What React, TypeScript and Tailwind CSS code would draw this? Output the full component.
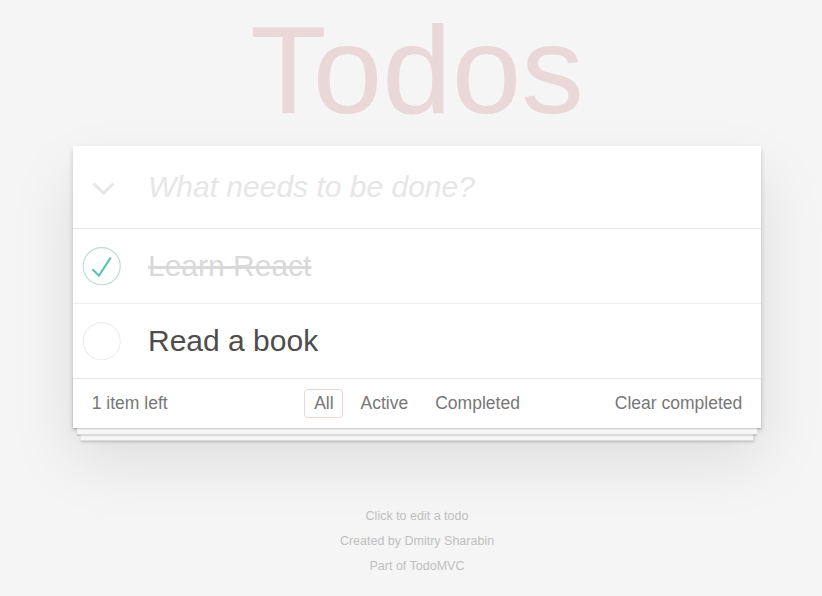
import { useState } from 'react';

type Todo = { id: number; title: string; completed: boolean };

const initialTodos: Todo[] = [
  { id: 1, title: 'Learn React', completed: true },
  { id: 2, title: 'Read a book', completed: false },
];

function Toggle({ checked }: { checked: boolean }) {
  return (
    <svg width="50" height="50" viewBox="-10 -18 100 135" className="shrink-0">
      <circle cx="50" cy="50" r="50" fill="none" stroke={checked ? '#bddad5' : '#ededed'} strokeWidth="3" />
      {checked && <path fill="#5dc2af" d="M72 25L42 71 27 56l-4 4 20 20 34-52z" />}
    </svg>
  );
}

export default function App() {
  const [todos, setTodos] = useState<Todo[]>(initialTodos);
  const left = todos.filter((t) => !t.completed).length;

  const toggle = (id: number) =>
    setTodos(todos.map((t) => (t.id === id ? { ...t, completed: !t.completed } : t)));

  return (
    <div className="min-h-screen overflow-hidden bg-[#f5f5f5] font-['Liberation_Sans',Arial,sans-serif] text-[#4d4d4d]">
      <div className="ml-[73px] flex w-[688px] flex-col">
        {/* Title */}
        <h1 className="mb-[6px] text-center text-[125px] leading-[140px] font-thin text-[#ead7d7]">
          Todos
        </h1>

        {/* Card */}
        <section className="bg-white shadow-[0_2.5px_5px_0_rgba(0,0,0,0.2),0_31px_62px_0_rgba(0,0,0,0.1)]">
          <div className="flex h-[82px] items-center">
            <div className="flex w-[75px] shrink-0 items-center pl-[19px] pt-[3px]">
              <svg width="23" height="13" viewBox="0 0 23 13">
                <polyline points="1.5,1.5 11.5,11 21.5,1.5" fill="none" stroke="#e6e6e6" strokeWidth="3" />
              </svg>
            </div>
            <input
              className="h-full flex-1 bg-transparent pr-[20px] text-[30px] font-light outline-none placeholder:italic placeholder:text-[#e6e6e6]"
              placeholder="What needs to be done?"
            />
          </div>

          <ul className="border-t border-[#e6e6e6]">
            {todos.map((todo, i) => (
              <li
                key={todo.id}
                className={`flex items-center ${
                  i < todos.length - 1 ? 'h-[75px] border-b border-[#ededed]' : 'h-[74px]'
                }`}
              >
                <button onClick={() => toggle(todo.id)} className="flex items-center">
                  <Toggle checked={todo.completed} />
                </button>
                <span
                  className={`ml-[25px] text-[30px] leading-[36px] font-light ${
                    todo.completed ? 'text-[#d9d9d9] line-through' : 'text-[#4d4d4d]'
                  }`}
                >
                  {todo.title}
                </span>
              </li>
            ))}
          </ul>

          {/* Footer */}
          <footer className="relative grid h-[50px] grid-cols-[1fr_auto_1fr] items-center border-t border-[#e6e6e6] px-[18.75px] text-[17.5px] text-[#777] shadow-[0_1.25px_1.25px_rgba(0,0,0,0.2),0_10px_0_-3.75px_#f6f6f6,0_11.25px_1.25px_-3.75px_rgba(0,0,0,0.2),0_20px_0_-7.5px_#f6f6f6,0_21.25px_2.5px_-7.5px_rgba(0,0,0,0.2)]">
            <span>
              {left} item{left === 1 ? '' : 's'} left
            </span>
            <ul className="flex items-center gap-[7.5px]">
              <li className="flex h-[29.5px] items-center rounded-[3.75px] border border-[#efd5d5] px-[8.75px]">All</li>
              <li className="flex h-[29.5px] items-center rounded-[3.75px] border border-transparent px-[8.75px]">Active</li>
              <li className="flex h-[29.5px] items-center rounded-[3.75px] border border-transparent px-[8.75px]">Completed</li>
            </ul>
            <button className="justify-self-end">Clear completed</button>
          </footer>
        </section>

        {/* Info */}
        <div className="mt-[82px] flex flex-col gap-[12.5px] text-center text-[12.5px] leading-none text-[#bfbfbf]">
          <p>Click to edit a todo</p>
          <p>Created by Dmitry Sharabin</p>
          <p>Part of TodoMVC</p>
        </div>
      </div>
    </div>
  );
}
